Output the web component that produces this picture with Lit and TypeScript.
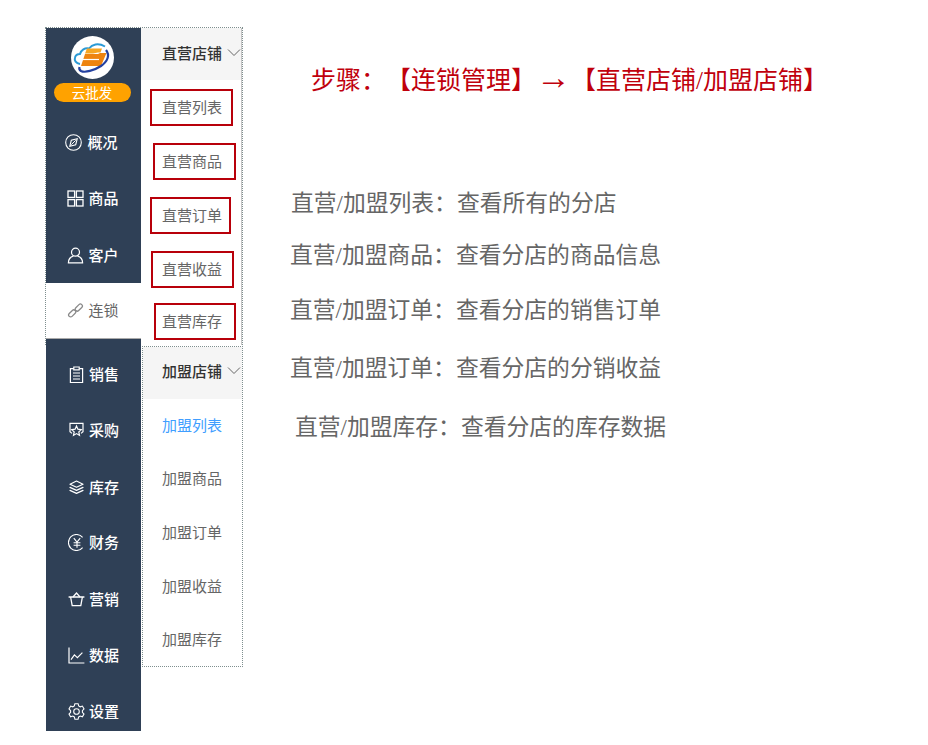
import { LitElement, html, css, svg } from "lit";
import { customElement } from "lit/decorators.js";

const icons: Record<string, unknown> = {
  compass: svg`<g fill="none" stroke="currentColor"><circle cx="8.500" cy="8.500" r="7.800" stroke-width="1.100"/><path d="M12.200 4.800 10.700 10.700 4.800 12.200 6.300 6.300z" stroke-width="1.100"/><path d="M6.300 10.700 10.700 6.300" stroke-width="1"/></g>`,
  grid: svg`<g fill="none" stroke="currentColor" stroke-width="1.300"><rect x="1" y="1" width="6.600" height="6.400"/><rect x="9.400" y="1" width="6.600" height="6.400"/><rect x="1" y="9.600" width="6.600" height="6.400"/><rect x="9.400" y="9.600" width="6.600" height="6.400"/></g>`,
  user: svg`<g fill="none" stroke="currentColor" stroke-width="1.200"><circle cx="8.500" cy="5.200" r="4"/><path d="M6.400 9.200C3.600 10 1.400 12.400 1.400 15.800h14.200c0-3.400-2.200-5.800-5-6.600"/></g>`,
  link: svg`<g fill="none" stroke="#8a8a8a" stroke-width="1.300"><rect x="1" y="9.400" width="8.400" height="4" rx="2" transform="rotate(-45 5.200 11.400)"/><rect x="7.600" y="3.600" width="8.400" height="4" rx="2" transform="rotate(-45 11.800 5.600)"/></g>`,
  clip: svg`<g fill="none" stroke="currentColor" stroke-width="1.200"><path d="M5.800 2.600H2.400v14h12.200v-14h-3.400"/><path d="M5.800 3.800V1h5.400v2.800z"/><path d="M5 7h7M5 10h7M5 13h7"/></g>`,
  star: svg`<g fill="none" stroke="currentColor" stroke-width="1.200"><path d="M4 11.400 2 9.800V1.400h13v8.400l-2 1.600"/><path d="m8.500 4 1.400 3.200 3.400.4-2.500 2.300.7 3.500-3-1.800-3 1.800.7-3.500-2.500-2.300 3.400-.4z"/></g>`,
  layers: svg`<g fill="none" stroke="currentColor" stroke-width="1.200" stroke-linejoin="round" stroke-linecap="round"><path d="M8.500 2 15 5.200 8.500 8.200 2 5.200z"/><path d="M2 8.400 8.500 11.400 15 8.400"/><path d="M2 11.400 8.500 14.400 15 11.400"/></g>`,
  yen: svg`<g fill="none" stroke="currentColor" stroke-width="1.100"><path d="M14.600 3.400a8 8 0 1 0 0 10.200"/><path d="m5.800 4.200 3.200 4 3.200-4M9 8.200v5.600M5.600 8.800h6.800M5.600 11.200h6.800"/></g>`,
  basket: svg`<g fill="none" stroke="currentColor" stroke-width="1.300"><path d="M.6 6h2m11.800 0h2M2.600 6l1.600 8.600h8.600L14.400 6H2.600z"/><path d="M5 6l3.500-4L12 6"/></g>`,
  chart: svg`<g fill="none" stroke="currentColor" stroke-width="1.200"><path d="M1 .4V16h15.400"/><path d="m3 12.600 3.400-4.800 3 2.800 5-5"/></g>`,
  gear: svg`<g fill="none" stroke="currentColor" stroke-width="1.100"><path d="M6.900.7h3.200l.6 2.300 1.500.8 2.200-.7 1.600 2.800-1.600 1.700v1.700l1.600 1.700-1.600 2.800-2.200-.7-1.500.8-.6 2.300H6.900l-.6-2.300-1.500-.8-2.200.7-1.600-2.800 1.600-1.700V7.600L1 5.900l1.600-2.800 2.200.7 1.500-.8z"/><circle cx="8.500" cy="8.500" r="2.800"/></g>`,
};

const nav = [
  { k: "compass", t: "概况", c: "wide" },
  { k: "grid", t: "商品", c: "" },
  { k: "user", t: "客户", c: "down" },
  { k: "link", t: "连锁", c: "active" },
  { k: "clip", t: "销售", c: "after nudge" },
  { k: "star", t: "采购", c: "nudge" },
  { k: "layers", t: "库存", c: "nudge down" },
  { k: "yen", t: "财务", c: "nudge up" },
  { k: "basket", t: "营销", c: "nudge down" },
  { k: "chart", t: "数据", c: "nudge" },
  { k: "gear", t: "设置", c: "nudge" },
];

const direct = [
  { t: "直营列表", l: 9, r: 8, top: 9, c: "" },
  { t: "直营商品", l: 12, r: 5, top: 9.400, c: "" },
  { t: "直营订单", l: 9, r: 10, top: 9.800, c: "low" },
  { t: "直营收益", l: 10, r: 7, top: 10.200, c: "low" },
  { t: "直营库存", l: 13, r: 5, top: 8.600, c: "tight" },
];
const joined = [
  { t: "加盟列表", c: "on lift" },
  { t: "加盟商品", c: "" },
  { t: "加盟订单", c: "lift" },
  { t: "加盟收益", c: "lift" },
  { t: "加盟库存", c: "" },
];
const notes = [
  { t: "直营/加盟列表：查看所有的分店", c: "n1" },
  { t: "直营/加盟商品：查看分店的商品信息", c: "n2" },
  { t: "直营/加盟订单：查看分店的销售订单", c: "n3" },
  { t: "直营/加盟订单：查看分店的分销收益", c: "n4" },
  { t: "直营/加盟库存：查看分店的库存数据", c: "n5" },
];

const chevron = svg`<path d="m1 1.500 6 6 6-6" fill="none" stroke="#666" stroke-width="1" />`;

@customElement("app-root")
export class AppRoot extends LitElement {
  static styles = css`
    :host {
      display: block;
      width: 928px;
      height: 745px;
      overflow: hidden;
      background: #fff;
      font-family: "Liberation Serif", "Noto Sans CJK SC", serif;
      text-spacing-trim: space-all;
    }
    .page { position: relative; display: flex; padding: 28px 0 0 46px; height: 717px; box-sizing: border-box; }
    .frame {
      position: absolute;
      left: 45px;
      top: 27px;
      width: 198px;
      height: 318px;
      box-sizing: border-box;
      border: 1px dotted #7f8f8f;
      border-bottom: 0;
      pointer-events: none;
    }
    .side {
      width: 95px;
      height: 703px;
      flex: none;
      background: #2f4056;
      color: #fff;
      display: flex;
      flex-direction: column;
      overflow: hidden;
      font: 500 15px "Noto Sans CJK SC", sans-serif;
    }
    .brand { height: 86px; flex: none; display: flex; flex-direction: column; align-items: center; padding-top: 8px; box-sizing: border-box; }
    .logo { width: 43px; height: 43px; display: block; margin-right: 3px; }
    .tag {
      margin: 4px 3px 0 0;
      width: 77px;
      height: 19px;
      border-radius: 10px;
      background: #ffa200;
      font-weight: 400;
      font-size: 13.500px;
      line-height: 18px;
      text-align: center;
    }
    .item { height: 56px; flex: none; display: flex; align-items: center; justify-content: center; gap: 4px; padding-right: 1px; box-sizing: border-box; }
    .item svg { width: 17px; height: 17px; flex: none; }
    .item span { line-height: 20px; }
    .item.wide { padding-right: 4px; gap: 5px; }
    .item.down { margin-top: 1px; }
    .item.up { margin-top: -1px; }
    .item.active { background: #fff; color: #666; font-weight: 400; border-bottom: 1px solid #aaa; padding-bottom: 1px; }
    .item.after { margin-top: 7px; }
    .item.nudge { padding-right: 0; }
    .subs { width: 102px; flex: none; display: flex; flex-direction: column; }
    .panel { background: #fff; }
    .panel.first { height: 317px; width: 100px; border-right: 1px solid #c4c4c4; }
    .panel.second { margin: 1px 0 0 1px; width: 101px; height: 321px; box-sizing: border-box; border: 1px dotted #7f8f8f; }
    .head {
      height: 52px;
      background: #f5f5f5;
      display: flex;
      align-items: center;
      padding: 0 0 3px 21px;
      box-sizing: border-box;
      gap: 5px;
      color: #333;
      font: 500 15px "Noto Sans CJK SC", sans-serif;
    }
    .head svg { width: 14px; height: 9px; flex: none; }
    .sub {
      position: relative;
      height: 53.600px;
      display: flex;
      align-items: center;
      padding-left: 21px;
      box-sizing: border-box;
      color: #666;
      font: 400 15px "Noto Sans CJK SC", sans-serif;
    }
    .sub.tight { padding-bottom: 2px; }
    .sub.low { padding-top: 2px; }
    .second .head { padding: 0 0 5px 19px; }
    .second .sub { padding: 0 0 4px 19px; }
    .second .sub.lift { padding-bottom: 2px; }
    .sub.on { color: #409eff; }
    .mark { position: absolute; height: 37px; border: 2px solid #b8000a; box-sizing: border-box; }
    .main { flex: 1; min-width: 0; display: flex; flex-direction: column; padding-left: 46px; }
    h1 {
      margin: 36px 0 0 22px;
      color: #c0000c;
      font-size: 25px;
      font-weight: 400;
      line-height: 34px;
      white-space: nowrap;
    }
    .arrow { font-size: 35px; line-height: 24px; }
    p { margin: 0; color: #666; font-size: 22.800px; line-height: 32px; white-space: nowrap; }
    .n1 { margin: 90px 0 0 2px; }
    .n2 { margin: 20px 0 0 1px; }
    .n3 { margin: 23px 0 0 1px; }
    .n4 { margin: 26px 0 0 1px; }
    .n5 { margin: 27px 0 0 6px; }
  `;

  render() {
    return html`<div class="page">
      <nav class="side">
        <div class="brand">
          <svg class="logo" viewBox="0 0 43 43">
            <circle cx="21.500" cy="21.500" r="21.500" fill="#fff" />
            <path d="M9 28c-4-.5-6-3.500-5-6.500.6-2.500 3-3.500 5-3.500 1-4 5-6.500 9-5.500 3-4 9-6 16-2" fill="none" stroke="#2b9ad6" stroke-width="2" />
            <path d="M16 12.500h15l-1.500 4H27l-5 1H14z" fill="#f6a623" />
            <path d="M14 18h13l2-1h6.500L30 30H10z" fill="#ee8410" />
            <path d="M12 23.500h16" stroke="#fff" stroke-width="1.200" />
            <path d="M35 14c4 5 2 11-5 16-7 4.500-16 7-20 5-1.500-1-2-2.500-1.500-4" fill="none" stroke="#2441a0" stroke-width="2.200" />
          </svg>
          <div class="tag">云批发</div>
        </div>
        ${nav.map(
          (n) => html`<div class="item ${n.c}">
            <svg viewBox="0 0 17 17">${icons[n.k]}</svg><span>${n.t}</span>
          </div>`
        )}
      </nav>
      <div class="subs">
        <section class="panel first">
          <div class="head">直营店铺<svg viewBox="0 0 14 9">${chevron}</svg></div>
          ${direct.map(
            (d) => html`<div class="sub ${d.c}">
              ${d.t}<i class="mark" style="left:${d.l}px;right:${d.r}px;top:${d.top}px"></i>
            </div>`
          )}
        </section>
        <section class="panel second">
          <div class="head">加盟店铺<svg viewBox="0 0 14 9">${chevron}</svg></div>
          ${joined.map((j) => html`<div class="sub ${j.c}">${j.t}</div>`)}
        </section>
      </div>
      <main class="main">
        <h1>步骤：【连锁管理】<span class="arrow">→</span>【直营店铺/加盟店铺】</h1>
        ${notes.map((n) => html`<p class=${n.c}>${n.t}</p>`)}
      </main>
      <div class="frame"></div>
    </div>`;
  }
}
